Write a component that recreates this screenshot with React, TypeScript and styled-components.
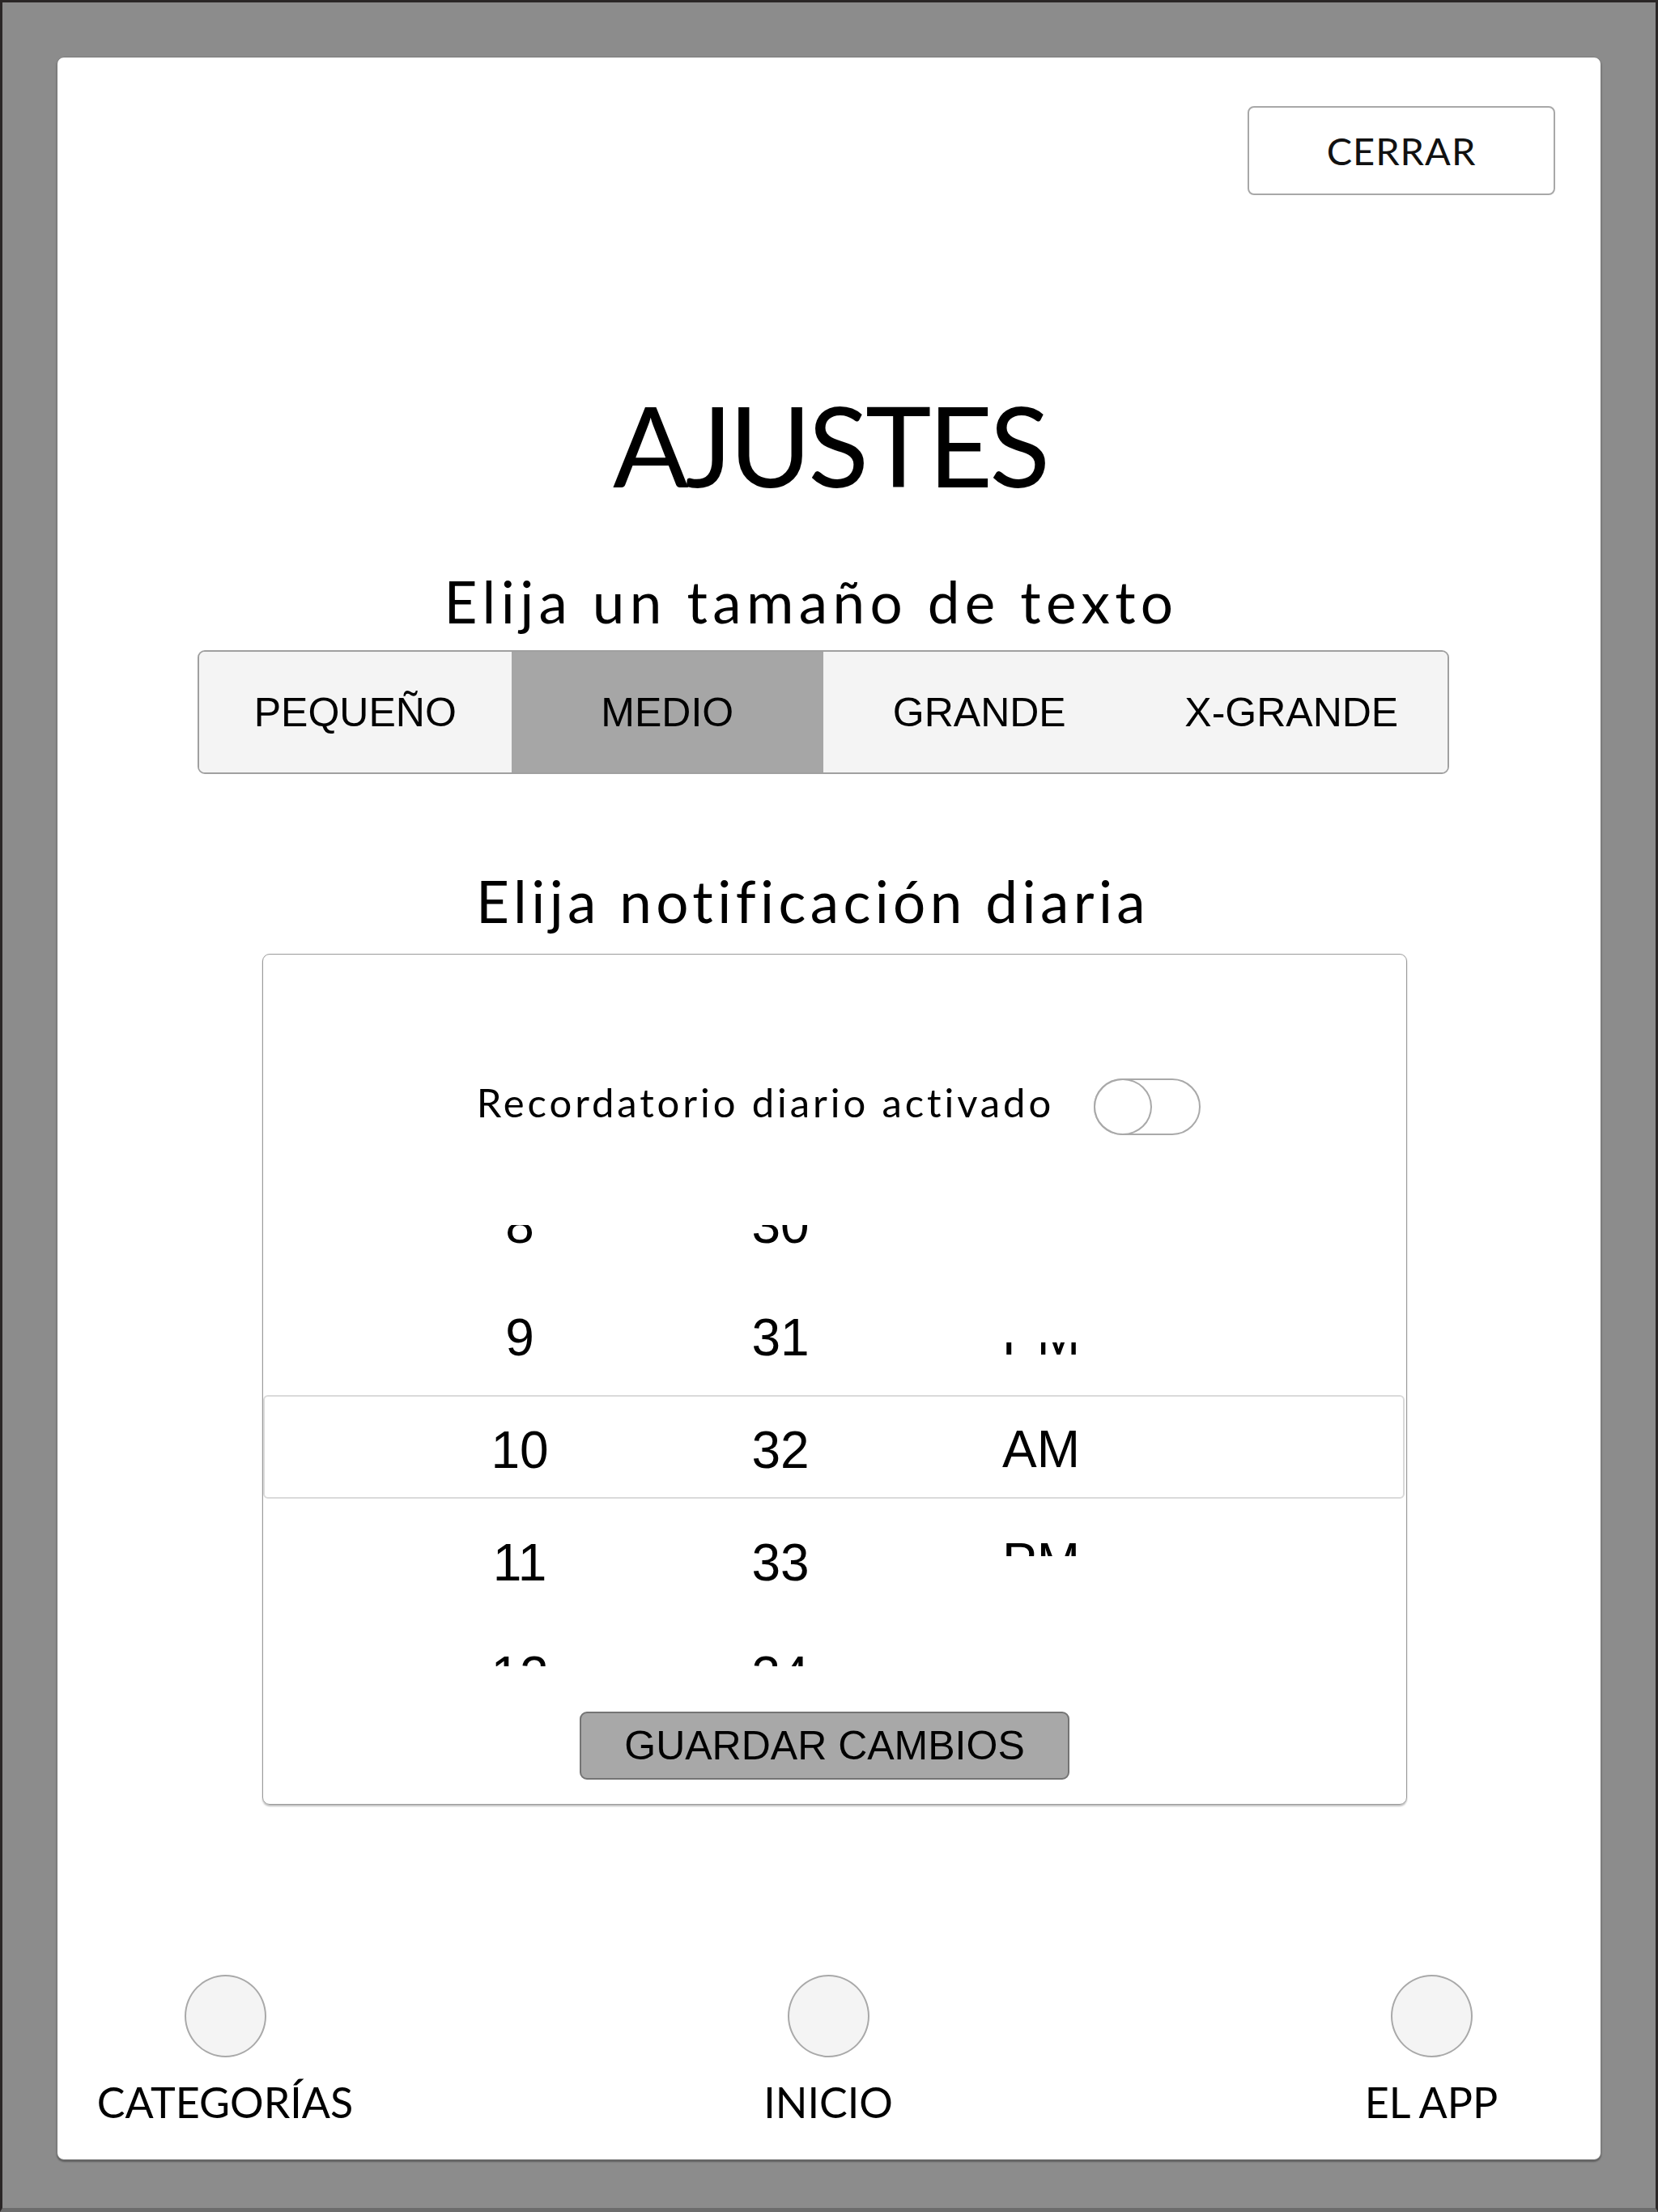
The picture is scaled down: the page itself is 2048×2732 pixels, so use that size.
import React, { useState } from "react";
import styled, { createGlobalStyle } from "styled-components";

const GEO = `"Lato", "Noto Sans", sans-serif`;
const ARIAL = `"Liberation Sans", Arial, sans-serif`;

const GlobalStyle = createGlobalStyle`
  html, body {
    margin: 0;
    padding: 0;
    background: #8c8c8c;
  }
  * {
    box-sizing: border-box;
  }
`;

const Frame = styled.div`
  width: 2048px;
  height: 2732px;
  background: #8c8c8c;
  border: 3px solid #2a2626;
  border-bottom: 5px solid #6c6c6c;
  padding: 67px;
`;

const Card = styled.div`
  width: 1908px;
  height: 2598px;
  background: #ffffff;
  border: 1px solid #7a7a7a;
  border-radius: 9px;
  box-shadow: 0 2px 2px rgba(0, 0, 0, 0.35);
  display: flex;
  flex-direction: column;
  align-items: center;
`;

const TopBar = styled.div`
  align-self: stretch;
  display: flex;
  justify-content: flex-end;
  padding: 60px 56px 0 0;
`;

const CloseButton = styled.button`
  width: 380px;
  height: 110px;
  background: #ffffff;
  border: 2px solid #a8a8a8;
  border-radius: 8px;
  font-family: ${GEO};
  font-size: 47px;
  color: #111;
  letter-spacing: 1px;
  cursor: pointer;
`;

const Title = styled.h1`
  margin: 225px 0 0 2px;
  font-family: ${GEO};
  font-weight: 400;
  font-size: 138px;
  line-height: 166px;
  letter-spacing: -4px;
  color: #000;
`;

interface HeadingProps {
  $top: number;
  $shift: number;
  $spacing: number;
}

const Heading = styled.h2<HeadingProps>`
  margin: ${(p) => p.$top}px ${(p) => p.$shift * 2}px 0 0;
  font-family: ${GEO};
  font-weight: 400;
  font-size: 71px;
  line-height: 85px;
  letter-spacing: ${(p) => p.$spacing}px;
  color: #000;
`;

const Segmented = styled.div`
  margin: 18px 14px 0 0;
  width: 1546px;
  height: 153px;
  display: grid;
  grid-template-columns: repeat(4, 1fr);
  border: 2px solid #a0a0a0;
  border-radius: 9px;
  overflow: hidden;
  background: #f4f4f4;
`;

const Segment = styled.button<{ $active: boolean }>`
  border: none;
  margin: 0;
  padding: 0;
  background: ${(p) => (p.$active ? "#a6a6a6" : "#f4f4f4")};
  font-family: ${ARIAL};
  font-size: 50px;
  color: #000;
  cursor: pointer;
`;

const Panel = styled.div`
  margin: 23px 0 0 14px;
  width: 1414px;
  height: 1051px;
  border: 1px solid #9a9a9a;
  border-radius: 9px;
  box-shadow: 0 2px 2px rgba(0, 0, 0, 0.25);
  display: flex;
  flex-direction: column;
`;

const ReminderRow = styled.div`
  margin-top: 153px;
  padding-left: 10px;
  display: flex;
  align-items: center;
  justify-content: center;
  gap: 49px;
  height: 70px;
`;

const ReminderLabel = styled.span`
  font-family: ${GEO};
  font-size: 49px;
  color: #000;
  margin-bottom: 12px;
  letter-spacing: 3.9px;
`;

const Track = styled.button<{ $on: boolean }>`
  position: relative;
  width: 132px;
  height: 70px;
  padding: 0;
  border: 2px solid #a9a9a9;
  border-radius: 35px;
  background: ${(p) => (p.$on ? "#d8d8d8" : "#ffffff")};
  cursor: pointer;
`;

const Knob = styled.span<{ $on: boolean }>`
  position: absolute;
  top: -2px;
  left: ${(p) => (p.$on ? "58px" : "-2px")};
  width: 72px;
  height: 70px;
  border: 2px solid #a9a9a9;
  border-radius: 50%;
  background: #ffffff;
`;

const Wheel = styled.div`
  position: relative;
  margin-top: 111px;
  height: 545px;
  display: grid;
  grid-template-columns: 240px 240px 240px;
  column-gap: 82px;
  padding-left: 197px;
`;

const Band = styled.div`
  position: absolute;
  top: 210px;
  left: 0;
  right: 2px;
  height: 128px;
  border: 2px solid #dadada;
  border-radius: 6px;
  background: #ffffff;
`;

interface ColumnProps {
  $top: number;
  $height: number;
}

const Column = styled.div<ColumnProps>`
  position: relative;
  margin-top: ${(p) => p.$top}px;
  height: ${(p) => p.$height}px;
  overflow: hidden;
`;

const ColumnList = styled.div<{ $offset: number }>`
  margin-top: ${(p) => p.$offset}px;
  display: flex;
  flex-direction: column;
`;

const WheelItem = styled.div`
  height: 139px;
  display: flex;
  align-items: center;
  justify-content: center;
  font-family: ${ARIAL};
  font-size: 64px;
  color: #000;
`;

const SaveButton = styled.button`
  align-self: flex-start;
  margin: 56px 0 0 391px;
  width: 605px;
  height: 84px;
  background: #a8a8a8;
  border: 2px solid #747474;
  border-radius: 9px;
  font-family: ${ARIAL};
  font-size: 50px;
  color: #000;
  cursor: pointer;
`;

const Nav = styled.nav`
  align-self: stretch;
  margin-top: 210px;
  padding-left: 7px;
  display: grid;
  grid-template-columns: repeat(3, 400px);
  column-gap: 345px;
`;

const NavItem = styled.div`
  display: flex;
  flex-direction: column;
  align-items: center;
  gap: 24px;
`;

const NavDot = styled.div`
  width: 101px;
  height: 102px;
  border-radius: 50%;
  background: #f4f4f4;
  border: 2px solid #a9a9a9;
`;

const NavLabel = styled.span`
  font-family: ${GEO};
  font-size: 52px;
  line-height: 62px;
  color: #000;
`;

const SIZES = ["PEQUEÑO", "MEDIO", "GRANDE", "X-GRANDE"];
const HOURS = ["8", "9", "10", "11", "12"];
const MINUTES = ["30", "31", "32", "33", "34"];
const PERIODS = ["PM", "AM", "PM"];
const NAV = ["CATEGORÍAS", "INICIO", "EL APP"];

export default function App() {
  const [size, setSize] = useState(1);
  const [reminder, setReminder] = useState(false);

  return (
    <>
      <GlobalStyle />
      <Frame>
        <Card>
          <TopBar>
            <CloseButton>CERRAR</CloseButton>
          </TopBar>

          <Title>AJUSTES</Title>

          <Heading $top={68} $shift={22} $spacing={6.4}>
            Elija un tamaño de texto
          </Heading>
          <Segmented>
            {SIZES.map((s, i) => (
              <Segment key={s} $active={i === size} onClick={() => setSize(i)}>
                {s}
              </Segment>
            ))}
          </Segmented>

          <Heading $top={114} $shift={20} $spacing={5.4}>
            Elija notificación diaria
          </Heading>
          <Panel>
            <ReminderRow>
              <ReminderLabel>Recordatorio diario activado</ReminderLabel>
              <Track $on={reminder} onClick={() => setReminder(!reminder)}>
                <Knob $on={reminder} />
              </Track>
            </ReminderRow>

            <Wheel>
              <Band />
              <Column $top={0} $height={545}>
                <ColumnList $offset={-70}>
                  {HOURS.map((h) => (
                    <WheelItem key={h}>{h}</WheelItem>
                  ))}
                </ColumnList>
              </Column>
              <Column $top={0} $height={545}>
                <ColumnList $offset={-70}>
                  {MINUTES.map((m) => (
                    <WheelItem key={m}>{m}</WheelItem>
                  ))}
                </ColumnList>
              </Column>
              <Column $top={145} $height={264}>
                <ColumnList $offset={-77}>
                  {PERIODS.map((p, i) => (
                    <WheelItem key={i}>{p}</WheelItem>
                  ))}
                </ColumnList>
              </Column>
            </Wheel>

            <SaveButton>GUARDAR CAMBIOS</SaveButton>
          </Panel>

          <Nav>
            {NAV.map((n) => (
              <NavItem key={n}>
                <NavDot />
                <NavLabel>{n}</NavLabel>
              </NavItem>
            ))}
          </Nav>
        </Card>
      </Frame>
    </>
  );
}
